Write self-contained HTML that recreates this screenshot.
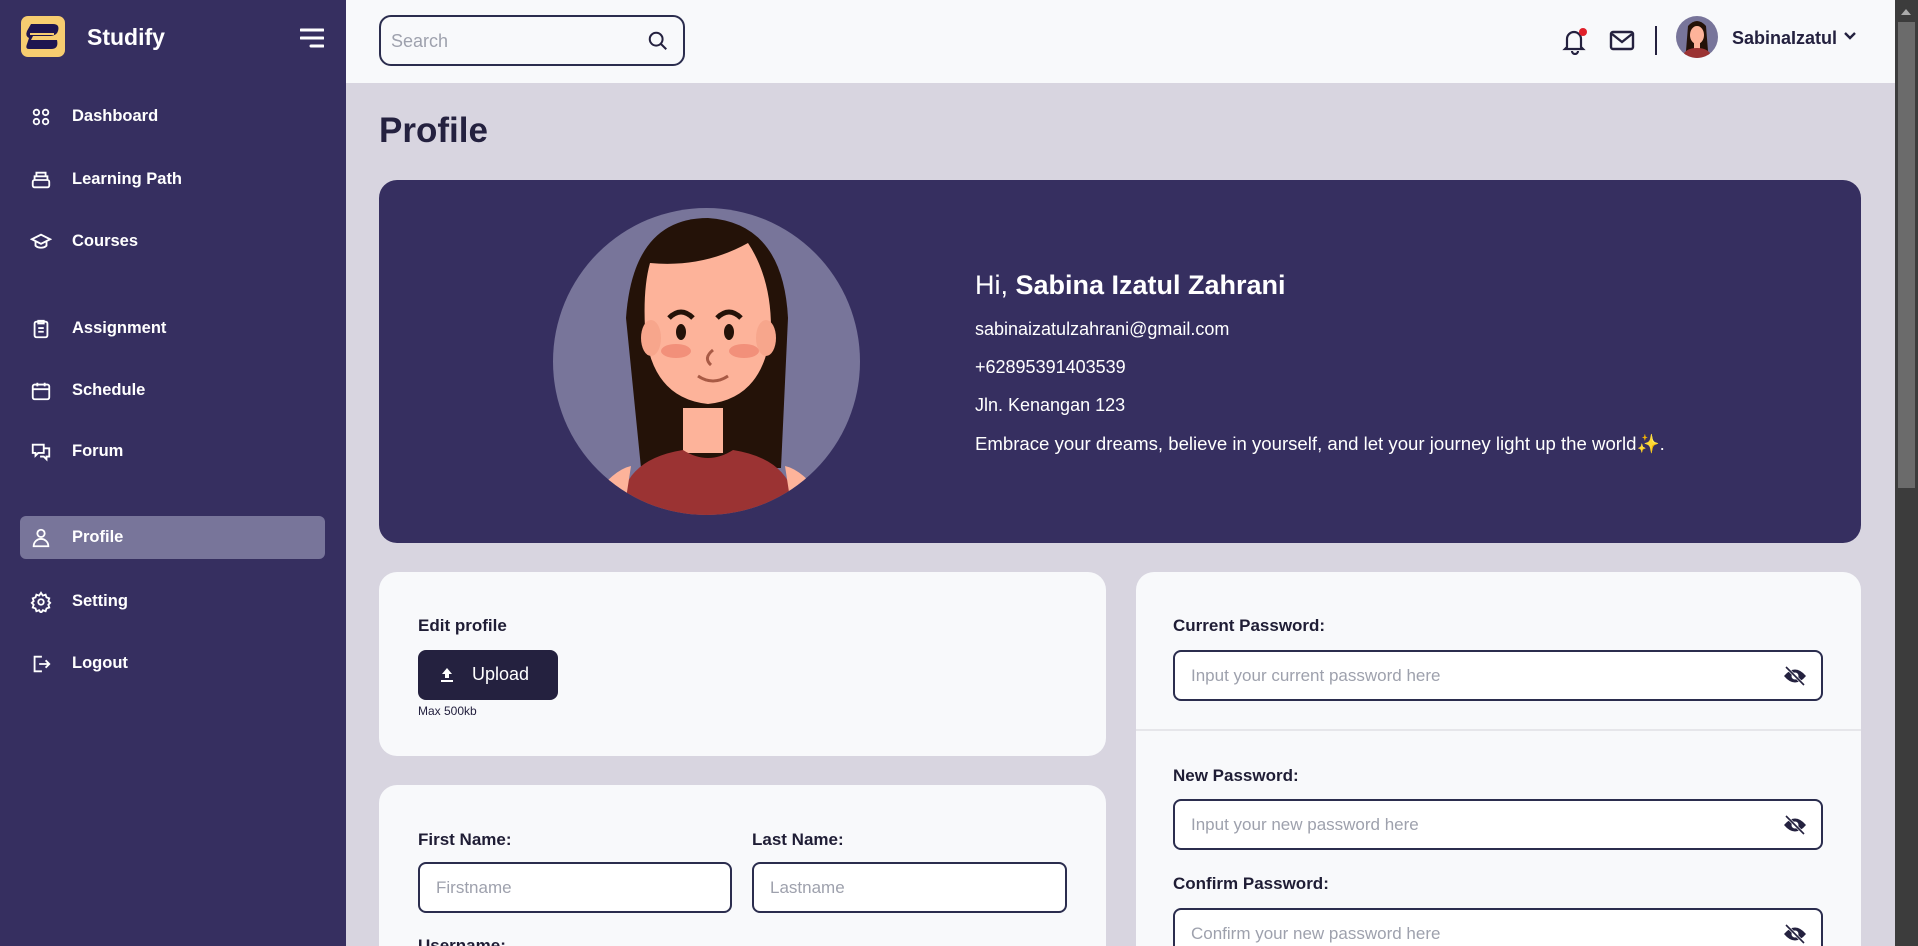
<!DOCTYPE html>
<html><head><meta charset="utf-8"><style>
*{box-sizing:border-box;margin:0;padding:0}
html,body{width:1918px;height:946px;overflow:hidden}
body{background:#d8d5e0;font-family:"Liberation Sans",sans-serif;color:#24213f;position:relative}
.a{position:absolute}
#side{left:0;top:0;width:346px;height:946px;background:#362f60}
.nav{position:absolute;left:20px;width:305px;height:43px;display:flex;align-items:center;color:#fff;font-weight:bold;font-size:16.5px;border-radius:6px}
.nav svg{margin-left:10px;margin-right:20px;width:22px;height:22px}
.nav.act{background:#78759a}
#top{left:346px;top:0;width:1549px;height:83px;background:#f8f9fb}
.card{background:#f8f9fb;border-radius:18px;position:absolute}
.lbl{position:absolute;font-weight:bold;font-size:17px;color:#1f1d35}
.inp{position:absolute;height:51px;border:2px solid #2b2d4e;border-radius:8px;background:#fff;color:#9ea1ad;font-size:17px;padding-left:16px;display:flex;align-items:center}
.eye{position:absolute;right:14px;top:13px}
.btxt{position:absolute;left:975px;color:#fff;font-size:18px}
</style></head><body>
<div id="side" class="a">
 <div class="a" style="left:21px;top:16px;width:44px;height:41px;background:#f7cd70;border-radius:7px">
  <svg width="44" height="41" viewBox="0 0 44 41"><path d="M10 8 H32 Q39 8 37 15 Q36 19 30 20 H12 L10 24 H36 Q38 33 30 33 H8 Q4 33 6 28 L8 22 Q4 20 6 15 Z" fill="#1e1550"/><path d="M9 18 H33" stroke="#f7cd70" stroke-width="2"/></svg>
 </div>
 <div class="a" style="left:87px;top:24px;color:#fff;font-weight:bold;font-size:23px">Studify</div>
 <svg class="a" style="left:300px;top:27px" width="24" height="22" viewBox="0 0 24 22"><path d="M1 3H23M1 11H23M11 19H23" stroke="#fff" stroke-width="3" stroke-linecap="round"/></svg>
 <div class="nav" style="top:95px"><svg viewBox="0 0 24 24" fill="none" stroke="#fff" stroke-width="2"><circle cx="7" cy="7" r="3"/><circle cx="17" cy="7" r="3"/><circle cx="7" cy="17" r="3"/><circle cx="17" cy="17" r="3"/></svg>Dashboard</div>
 <div class="nav" style="top:158px"><svg viewBox="0 0 24 24" fill="none" stroke="#fff" stroke-width="2"><rect x="3" y="12" width="18" height="8" rx="2"/><path d="M5 12V8h14v4M7 8V4h10v4"/></svg>Learning Path</div>
 <div class="nav" style="top:220px"><svg viewBox="0 0 24 24" fill="none" stroke="#fff" stroke-width="2"><path d="M2 9l10-5 10 5-10 5z M6 11v5c3 3 9 3 12 0v-5"/></svg>Courses</div>
 <div class="nav" style="top:307px"><svg viewBox="0 0 24 24" fill="none" stroke="#fff" stroke-width="2"><rect x="5" y="4" width="14" height="17" rx="2"/><path d="M9 3h6v3H9zM9 11h6M9 15h6"/></svg>Assignment</div>
 <div class="nav" style="top:369px"><svg viewBox="0 0 24 24" fill="none" stroke="#fff" stroke-width="2"><rect x="3" y="5" width="18" height="16" rx="2"/><path d="M3 10h18M8 3v4M16 3v4"/></svg>Schedule</div>
 <div class="nav" style="top:430px"><svg viewBox="0 0 24 24" fill="none" stroke="#fff" stroke-width="2"><path d="M3 4h12v9H9l-3 3v-3H3zM15 8h6v9h-3v3l-3-3h-4"/></svg>Forum</div>
 <div class="nav act" style="top:516px"><svg viewBox="0 0 24 24" fill="none" stroke="#fff" stroke-width="2"><circle cx="12" cy="7" r="4"/><path d="M4 21c0-5 4-8 8-8s8 3 8 8z"/></svg>Profile</div>
 <div class="nav" style="top:580px"><svg viewBox="0 0 24 24" fill="none" stroke="#fff" stroke-width="2"><circle cx="12" cy="12" r="3"/><path d="M12 2l2 3 3-1 1 3 3 1-1 3 2 2-2 2 1 3-3 1-1 3-3-1-2 3-2-3-3 1-1-3-3-1 1-3-2-2 2-2-1-3 3-1 1-3 3 1z"/></svg>Setting</div>
 <div class="nav" style="top:642px"><svg viewBox="0 0 24 24" fill="none" stroke="#fff" stroke-width="2"><path d="M13 4H5v16h8M10 12h11M17 8l4 4-4 4"/></svg>Logout</div>
</div>
<div id="top" class="a">
 <div class="a" style="left:33px;top:15px;width:306px;height:51px;border:2px solid #2b2d4e;border-radius:12px;color:#9ea1ad;font-size:18px;padding:14px 0 0 10px">Search
  <svg class="a" style="right:14px;top:13px" width="22" height="22" viewBox="0 0 24 24" fill="none" stroke="#24213f" stroke-width="2.2"><circle cx="10" cy="10" r="7"/><path d="M15 15l6 6"/></svg></div>
 <svg class="a" style="left:1216px;top:27px" width="26" height="28" viewBox="0 0 26 28" fill="none" stroke="#24213f" stroke-width="2.2"><path d="M5 20V12a7 7 0 0114 0v8l2 2H3zM10 24a3 3 0 006 0"/><circle cx="21" cy="5" r="4" fill="#e0202a" stroke="none"/></svg>
 <svg class="a" style="left:1263px;top:30px" width="26" height="22" viewBox="0 0 26 22" fill="none" stroke="#24213f" stroke-width="2.4"><rect x="2" y="2" width="22" height="17" rx="2"/><path d="M3 4l10 8 10-8"/></svg>
 <div class="a" style="left:1309px;top:26px;width:2px;height:29px;background:#24213f"></div>
 <svg class="a" style="left:1330px;top:16px" width="42" height="42" viewBox="0 0 42 42"><clipPath id="c1"><circle cx="21" cy="21" r="21"/></clipPath><g clip-path="url(#c1)"><rect width="42" height="42" fill="#78759a"/><path d="M10 35 L12 10 Q21 0 30 10 L32 35Z" fill="#241208"/><ellipse cx="21" cy="19" rx="7" ry="9" fill="#fdb39a"/><rect x="18" y="25" width="6" height="8" fill="#fdb39a"/><path d="M6 42 Q8 32 21 32 Q34 32 36 42Z" fill="#9b3333"/></g></svg>
 <div class="a" style="left:1386px;top:28px;font-size:18px;font-weight:bold">SabinaIzatul</div>
 <svg class="a" style="left:1497px;top:31px" width="14" height="10" viewBox="0 0 14 10" fill="none" stroke="#24213f" stroke-width="2.4"><path d="M2 2l5 5 5-5"/></svg>
</div>
<div class="a" style="left:1895px;top:0;width:23px;height:946px;background:#3c3c3c"><div class="a" style="left:3px;top:22px;width:17px;height:466px;background:#6b6b6b"></div><div class="a" style="left:6px;top:9px;border:5px solid transparent;border-bottom:6px solid #aaa;border-top:0"></div></div>
<div class="a" style="left:379px;top:111px;font-size:35px;font-weight:bold">Profile</div>
<div class="a" style="left:379px;top:180px;width:1482px;height:363px;background:#362f60;border-radius:18px"></div>
<svg class="a" style="left:553px;top:208px" width="307" height="307" viewBox="0 0 307 307"><clipPath id="c2"><circle cx="153.5" cy="153.5" r="153.5"/></clipPath><g clip-path="url(#c2)"><rect width="307" height="307" fill="#78759a"/><path d="M88 260 L73 110 Q80 10 155 10 Q230 15 235 110 L228 260Z" fill="#241208"/><path d="M130 200 h40 v45 h-40z" fill="#fdb39a"/><path d="M97 55 Q150 60 195 35 Q218 70 218 120 Q212 190 155 196 Q98 190 92 120 Q90 80 97 55Z" fill="#fdb39a"/><ellipse cx="98" cy="130" rx="10" ry="18" fill="#f7a68c"/><ellipse cx="213" cy="130" rx="10" ry="18" fill="#f7a68c"/><ellipse cx="123" cy="143" rx="15" ry="7" fill="#f2907a"/><ellipse cx="191" cy="143" rx="15" ry="7" fill="#f2907a"/><ellipse cx="128" cy="124" rx="5" ry="8" fill="#241208"/><ellipse cx="176" cy="124" rx="5" ry="8" fill="#241208"/><path d="M116 110 Q128 98 140 110 M164 110 Q176 98 188 110" stroke="#241208" stroke-width="5" fill="none"/><path d="M160 142 Q150 150 158 157 M145 168 Q160 178 175 168" stroke="#a85a45" stroke-width="3" fill="none"/><path d="M70 285 Q80 250 130 242 Q155 258 180 242 Q230 250 240 285 L240 320 L70 320Z" fill="#9b3333"/><path d="M40 290 Q60 262 78 258 L70 310Z M270 290 Q250 262 232 258 L240 310Z" fill="#fdb39a"/></g></svg>
<div class="btxt" style="top:270px;font-size:27px">Hi, <b>Sabina Izatul Zahrani</b></div>
<div class="btxt" style="top:319px">sabinaizatulzahrani@gmail.com</div>
<div class="btxt" style="top:357px">+62895391403539</div>
<div class="btxt" style="top:395px">Jln. Kenangan 123</div>
<div class="btxt" style="top:433px;font-size:18.6px">Embrace your dreams, believe in yourself, and let your journey light up the world✨.</div>
<div class="card" style="left:379px;top:572px;width:727px;height:184px"></div>
<div class="lbl" style="left:418px;top:616px">Edit profile</div>
<div class="a" style="left:418px;top:650px;width:140px;height:50px;background:#24213f;border-radius:8px;color:#fff;font-size:18px;padding:14px 0 0 54px">Upload
 <svg class="a" style="left:22px;top:17px" width="14" height="15" viewBox="0 0 14 15" fill="#fff"><path d="M7 1L2 7h3v4h4V7h3z M1 13h12v2H1z"/></svg></div>
<div class="a" style="left:418px;top:704px;font-size:12px">Max 500kb</div>
<div class="card" style="left:379px;top:785px;width:727px;height:161px;border-radius:18px 18px 0 0"></div>
<div class="lbl" style="left:418px;top:830px">First Name:</div>
<div class="lbl" style="left:752px;top:830px">Last Name:</div>
<div class="inp" style="left:418px;top:862px;width:314px">Firstname</div>
<div class="inp" style="left:752px;top:862px;width:315px">Lastname</div>
<div class="card" style="left:1136px;top:572px;width:725px;height:374px;border-radius:18px 18px 0 0"></div>
<div class="a" style="left:1136px;top:729px;width:725px;height:2px;background:#e6e6ea"></div>
<div class="lbl" style="left:1173px;top:616px">Current Password:</div>
<div class="inp" style="left:1173px;top:650px;width:650px">Input your current password here<svg class="eye" width="24" height="22" viewBox="0 0 24 22"><path d="M1 11Q12 -2 23 11Q12 24 1 11Z" fill="#24213f"/><circle cx="12" cy="11" r="3.5" fill="#fff"/><path d="M3 2L21 20" stroke="#fff" stroke-width="3"/><path d="M3 2L21 20" stroke="#24213f" stroke-width="1.6"/></svg></div>
<div class="lbl" style="left:1173px;top:766px">New Password:</div>
<div class="inp" style="left:1173px;top:799px;width:650px">Input your new password here<svg class="eye" width="24" height="22" viewBox="0 0 24 22"><path d="M1 11Q12 -2 23 11Q12 24 1 11Z" fill="#24213f"/><circle cx="12" cy="11" r="3.5" fill="#fff"/><path d="M3 2L21 20" stroke="#fff" stroke-width="3"/><path d="M3 2L21 20" stroke="#24213f" stroke-width="1.6"/></svg></div>
<div class="lbl" style="left:1173px;top:874px">Confirm Password:</div>
<div class="inp" style="left:1173px;top:908px;width:650px">Confirm your new password here<svg class="eye" width="24" height="22" viewBox="0 0 24 22"><path d="M1 11Q12 -2 23 11Q12 24 1 11Z" fill="#24213f"/><circle cx="12" cy="11" r="3.5" fill="#fff"/><path d="M3 2L21 20" stroke="#fff" stroke-width="3"/><path d="M3 2L21 20" stroke="#24213f" stroke-width="1.6"/></svg></div>
<div class="lbl" style="left:418px;top:936px">Username:</div>
</body></html>
